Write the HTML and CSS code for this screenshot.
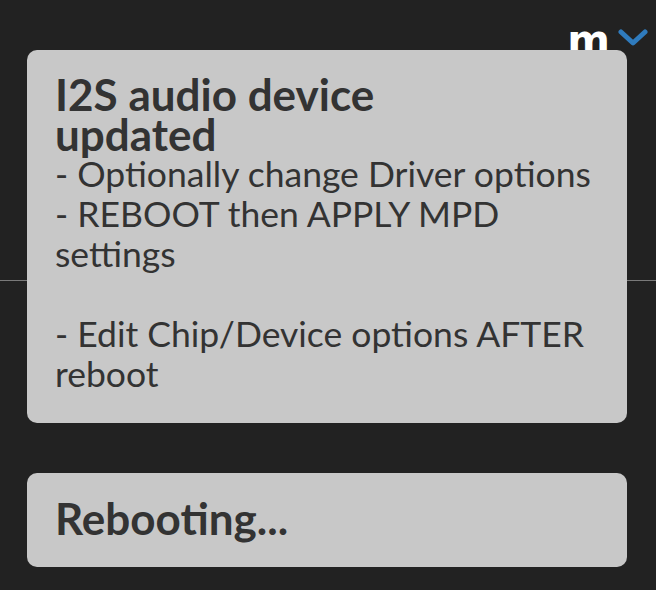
FILE: index.html
```html
<!DOCTYPE html>
<html lang="en">
<head>
    <meta charset="UTF-8">
    <title>moOde</title>
    <link rel="stylesheet" href="styles.css">
</head>
<body>
    <div class="page">
        <div class="topbar">
            <span class="logo">m</span>
            <svg class="chevron" width="30" height="18" viewBox="0 0 30 18">
                <polyline points="3,3 15,14 27,3" fill="none" stroke="#2f7bbd" stroke-width="5" stroke-linecap="round" stroke-linejoin="round"/>
            </svg>
        </div>
        <div class="divider"></div>
    </div>

    <div class="toasts">
        <div class="toast">
            <div class="toast-title">I2S audio device<br>updated</div>
            <div class="toast-body">- Optionally change Driver options<br>- REBOOT then APPLY MPD settings<br><br>- Edit Chip/Device options AFTER reboot</div>
        </div>
        <div class="toast toast-short">
            <div class="toast-title">Rebooting...</div>
        </div>
    </div>
</body>
</html>
```

FILE: styles.css
```css
body {
    margin: 0;
    background: #222222;
    font-family: Lato, "Noto Sans", sans-serif;
    color: #333333;
}

.page {
    height: 590px;
}

.topbar {
    display: flex;
    justify-content: flex-end;
    align-items: center;
    gap: 8px;
    height: 40px;
    padding: 18px 8px 0 0;
}

.logo {
    font-family: "DejaVu Sans", sans-serif;
    font-weight: bold;
    font-size: 41px;
    line-height: 40px;
    color: #ffffff;
    margin-top: 4px;
}

.chevron {
    display: block;
}

.divider {
    margin-top: 222px;
    height: 1px;
    width: 100%;
    background: #7a7a7a;
}

.toasts {
    position: absolute;
    top: 50px;
    left: 27px;
    width: 600px;
    display: flex;
    flex-direction: column;
    gap: 50px;
}

.toast {
    background: #c8c8c8;
    border-radius: 10px;
    padding: 24px 28px 29px;
    font-size: 35.5px;
    line-height: 40px;
}

.toast-title {
    font-weight: bold;
    font-size: 44px;
}

.toast-short {
    padding-top: 25px;
}
```
